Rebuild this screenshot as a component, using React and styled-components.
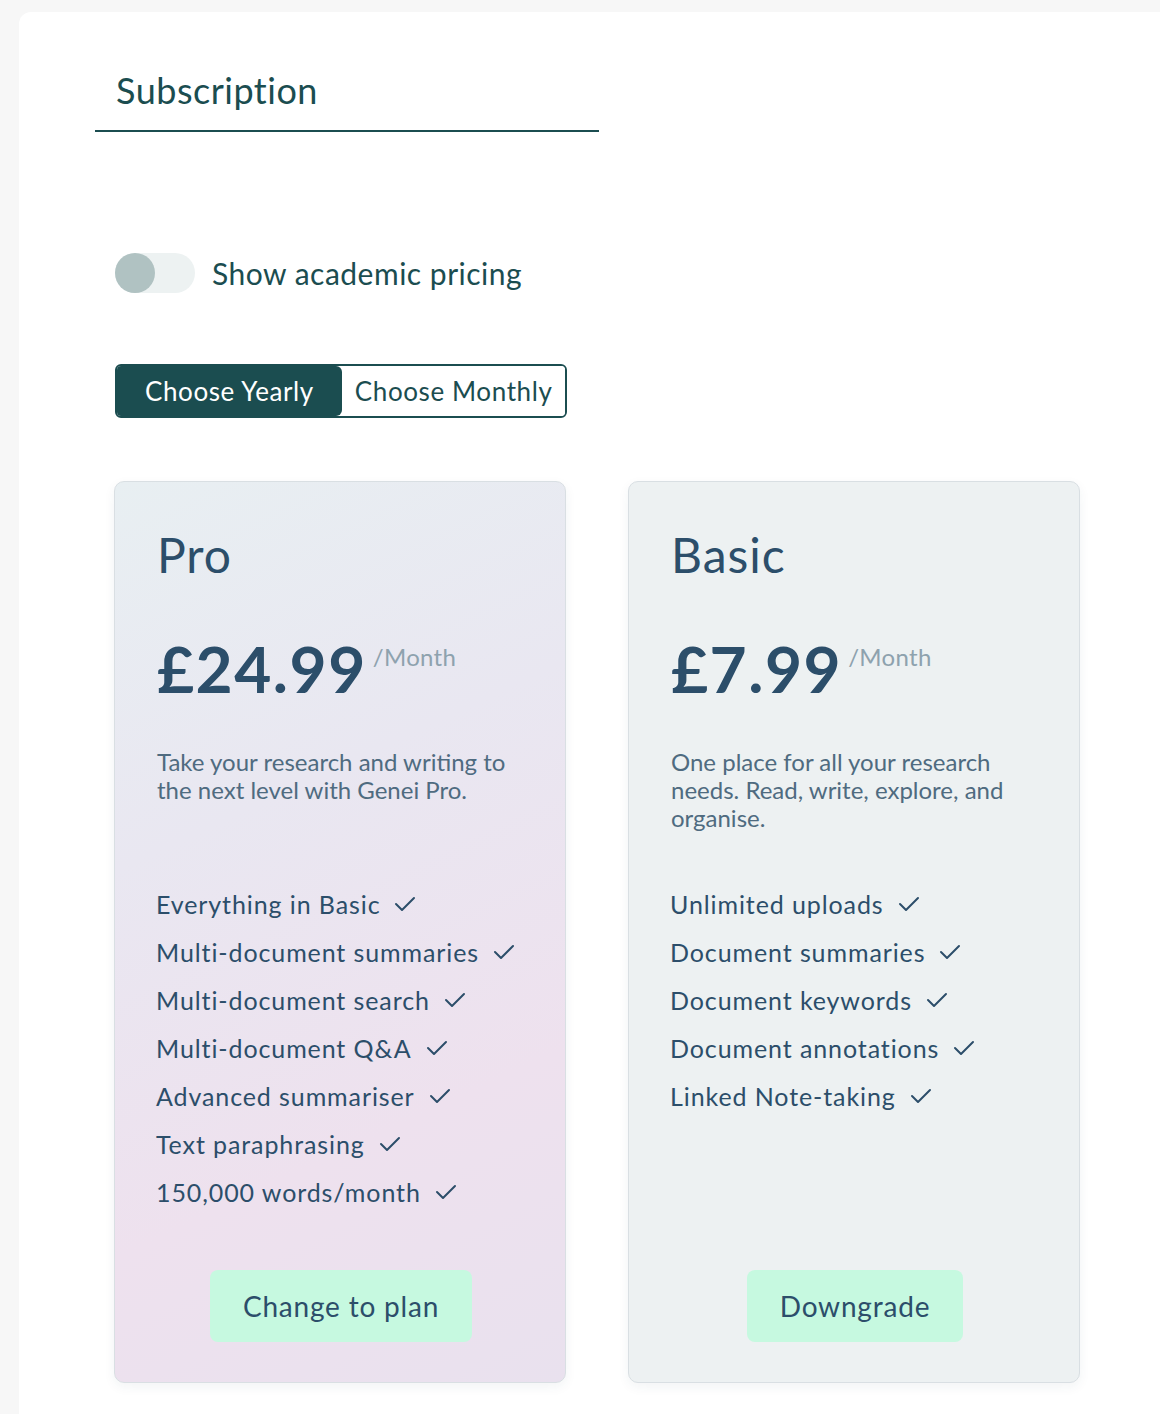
import React from "react";
import styled, { createGlobalStyle } from "styled-components";

const Global = createGlobalStyle`
  html, body { margin: 0; padding: 0; background: #f7f7f7; }
  body { font-family: "Lato", "Open Sans", sans-serif; -webkit-font-smoothing: antialiased; }
  * { box-sizing: border-box; }
`;

const Panel = styled.div`
  margin: 12px 0 0 19px;
  min-height: 1402px;
  background: #ffffff;
  border-radius: 12px 0 0 0;
  padding: 56px 0 40px 76px;
`;

const Tab = styled.div`
  width: 504px;
  padding: 0 0 18px 21px;
  border-bottom: 2px solid #1b4d50;
  color: #1b4d50;
  font-size: 36px;
  line-height: 44px;
  letter-spacing: 0.5px;
`;

const Body = styled.div`
  padding-left: 20px;
`;

const ToggleRow = styled.label`
  display: flex;
  align-items: center;
  gap: 17px;
  margin-top: 121px;
  color: #1b4d50;
  font-size: 30px;
  letter-spacing: 0.5px;
`;

const Track = styled.span`
  position: relative;
  width: 80px;
  height: 40px;
  border-radius: 20px;
  background: #edf2f2;
`;

const Knob = styled.span`
  position: absolute;
  left: 0;
  top: 0;
  width: 40px;
  height: 40px;
  border-radius: 50%;
  background: #b0c2c2;
`;

const Segmented = styled.div`
  display: inline-flex;
  margin-top: 71px;
  border: 2px solid #1b4d50;
  border-radius: 6px;
  overflow: hidden;
  height: 54px;
`;

const Seg = styled.button`
  border: none;
  margin: 0;
  font-family: inherit;
  font-size: 26px;
  letter-spacing: 0.6px;
  padding: 0 ${(p) => (p.$active ? "28px" : "13px")};
  background: ${(p) => (p.$active ? "#1b4d50" : "#ffffff")};
  color: ${(p) => (p.$active ? "#ffffff" : "#1b4d50")};
  border-radius: ${(p) => (p.$active ? "0 6px 6px 0" : "0")};
`;

const Cards = styled.div`
  display: grid;
  grid-template-columns: 452px 452px;
  gap: 62px;
  margin-top: 63px;
  margin-left: -1px;
`;

const Card = styled.div`
  display: flex;
  flex-direction: column;
  height: 902px;
  padding: 44px 40px 40px 42px;
  border: 1px solid #d9dfe3;
  border-radius: 10px;
  box-shadow: 0 4px 12px rgba(40, 60, 80, 0.06);
  background: ${(p) =>
    p.$pro
      ? "linear-gradient(155deg, #e8eff2 0%, #e9e7f1 35%, #eee1ee 70%, #e9e1ee 100%)"
      : "#edf1f2"};
  color: #2c4e6a;
`;

const PlanName = styled.div`
  font-size: 48px;
  line-height: 58px;
  letter-spacing: 1px;
`;

const PriceRow = styled.div`
  display: flex;
  align-items: flex-start;
  margin-top: 48px;
`;

const Price = styled.span`
  font-size: 64px;
  font-weight: 700;
  line-height: 74px;
  letter-spacing: 1.5px;
`;

const Per = styled.span`
  font-size: 24px;
  color: #8ea2ae;
  margin: 10px 0 0 6px;
  letter-spacing: 0.3px;
`;

const Desc = styled.p`
  margin: 42px 0 0;
  min-height: 84px;
  font-size: 24px;
  line-height: 28px;
  color: #4f6b80;
  letter-spacing: 0;
`;

const Features = styled.ul`
  list-style: none;
  margin: 57px 0 0 -1px;
  padding: 0;
  display: flex;
  flex-direction: column;
  gap: 18px;
`;

const Feature = styled.li`
  display: flex;
  align-items: center;
  gap: 14px;
  font-size: 25px;
  line-height: 30px;
  letter-spacing: 0.9px;
`;

const Action = styled.button`
  margin: auto auto 0;
  height: 72px;
  padding: 0 33px;
  border: none;
  border-radius: 8px;
  background: #c6f9e0;
  color: #2c4e6a;
  font-family: inherit;
  font-size: 28px;
  letter-spacing: 0.8px;
`;

const Check = () => (
  <svg width="22" height="18" viewBox="0 0 22 18" fill="none">
    <polyline points="2,9 8,15 20,3" stroke="#2c4e6a" strokeWidth="2" strokeLinecap="round" strokeLinejoin="round" />
  </svg>
);

const plans = [
  {
    pro: true,
    name: "Pro",
    price: "£24.99",
    desc: "Take your research and writing to the next level with Genei Pro.",
    features: [
      "Everything in Basic",
      "Multi-document summaries",
      "Multi-document search",
      "Multi-document Q&A",
      "Advanced summariser",
      "Text paraphrasing",
      "150,000 words/month",
    ],
    action: "Change to plan",
  },
  {
    pro: false,
    name: "Basic",
    price: "£7.99",
    desc: "One place for all your research needs. Read, write, explore, and organise.",
    features: [
      "Unlimited uploads",
      "Document summaries",
      "Document keywords",
      "Document annotations",
      "Linked Note-taking",
    ],
    action: "Downgrade",
  },
];

export default function App() {
  return (
    <>
      <Global />
      <Panel>
        <Tab>Subscription</Tab>
        <Body>
          <ToggleRow>
            <Track>
              <Knob />
            </Track>
            Show academic pricing
          </ToggleRow>
          <Segmented>
            <Seg $active>Choose Yearly</Seg>
            <Seg>Choose Monthly</Seg>
          </Segmented>
          <Cards>
            {plans.map((p) => (
              <Card key={p.name} $pro={p.pro}>
                <PlanName>{p.name}</PlanName>
                <PriceRow>
                  <Price>{p.price}</Price>
                  <Per>/Month</Per>
                </PriceRow>
                <Desc>{p.desc}</Desc>
                <Features>
                  {p.features.map((f) => (
                    <Feature key={f}>
                      {f}
                      <Check />
                    </Feature>
                  ))}
                </Features>
                <Action>{p.action}</Action>
              </Card>
            ))}
          </Cards>
        </Body>
      </Panel>
    </>
  );
}
